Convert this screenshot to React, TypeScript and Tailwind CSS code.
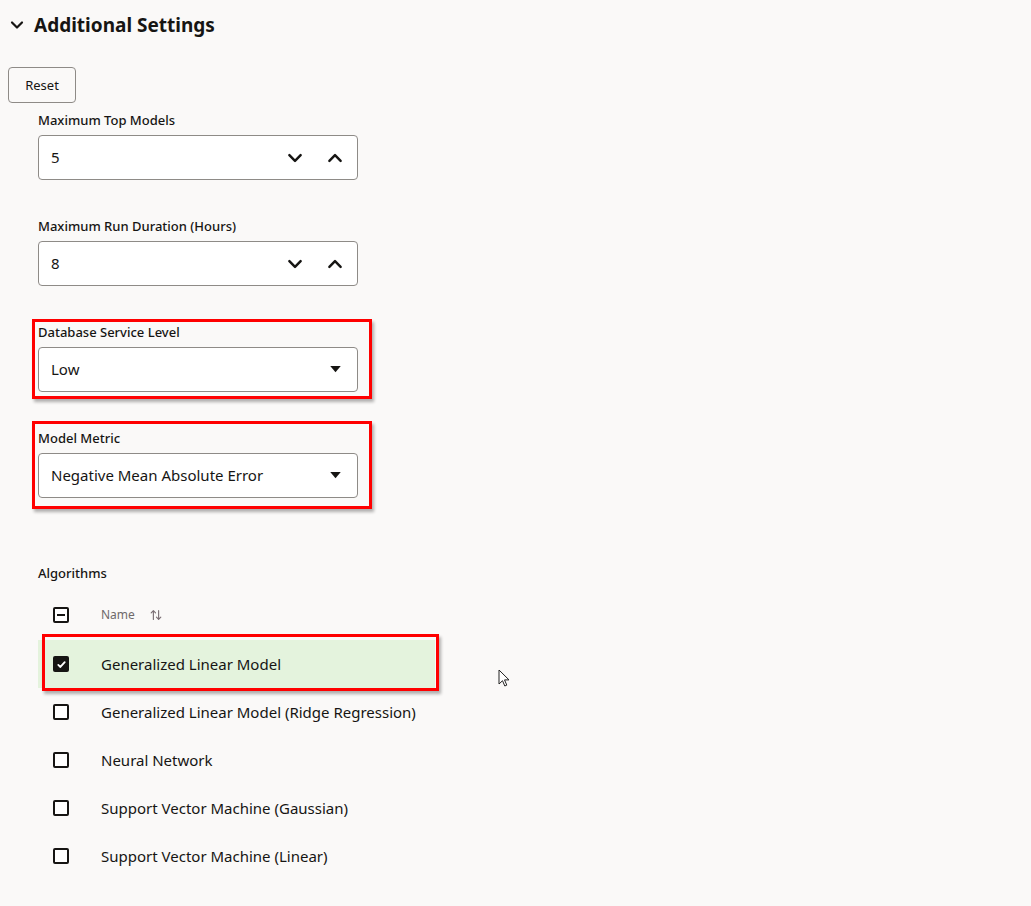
import { useState } from 'react'

const font = { fontFamily: '"Noto Sans", "Open Sans", sans-serif' }

function ChevronDown({ className = '' }: { className?: string }) {
  return (
    <svg viewBox="0 0 16 16" className={className} fill="none" stroke="currentColor" strokeWidth={2.2} strokeLinecap="round" strokeLinejoin="round">
      <path d="M3 5.5l5 5 5-5" />
    </svg>
  )
}

function ChevronUp({ className = '' }: { className?: string }) {
  return (
    <svg viewBox="0 0 16 16" className={className} fill="none" stroke="currentColor" strokeWidth={2.2} strokeLinecap="round" strokeLinejoin="round">
      <path d="M3 10.5l5-5 5 5" />
    </svg>
  )
}

function Label({ children }: { children: React.ReactNode }) {
  return <div className="text-[13px] leading-4 font-medium text-[#161513]">{children}</div>
}

function NumberField({ label, value }: { label: string; value: string }) {
  return (
    <div>
      <Label>{label}</Label>
      <div className="mt-[7px] flex h-[45px] w-[320px] items-center rounded-[4px] border border-[#8e8b87] bg-white pl-[12px] pr-[13px]">
        <span className="flex-1 text-[15px] text-[#161513]">{value}</span>
        <ChevronDown className="h-[18px] w-[18px] text-[#161513]" />
        <ChevronUp className="ml-[22px] h-[18px] w-[18px] text-[#161513]" />
      </div>
    </div>
  )
}

function SelectField({ label, value }: { label: string; value: string }) {
  return (
    <div>
      <Label>{label}</Label>
      <div className="mt-[7px] flex h-[45px] w-[320px] items-center rounded-[4px] border border-[#8e8b87] bg-white pl-[12px] pr-[15px]">
        <span className="flex-1 text-[15px] text-[#161513]">{value}</span>
        <svg viewBox="0 0 12 8" className="h-[7px] w-[13px] text-[#161513]" fill="currentColor">
          <path d="M0 0h12L6 7z" />
        </svg>
      </div>
    </div>
  )
}

// red annotation frame drawn over a field
function Annotated({ children, className }: { children: React.ReactNode; className: string }) {
  return (
    <div className="relative">
      {children}
      <div className={`pointer-events-none absolute border-[3px] border-[#ff0000] shadow-[2px_3px_3px_rgba(0,0,0,0.3)] ${className}`} />
    </div>
  )
}

function Checkbox({ checked, mixed }: { checked?: boolean; mixed?: boolean }) {
  if (checked) {
    return (
      <div className="flex h-[16px] w-[16px] items-center justify-center rounded-[2px] bg-[#161513]">
        <svg viewBox="0 0 12 12" className="h-[11px] w-[11px]" fill="none" stroke="white" strokeWidth={2} strokeLinecap="round" strokeLinejoin="round">
          <path d="M2.5 6.5l2.3 2.2L9.5 3.5" />
        </svg>
      </div>
    )
  }
  return (
    <div className="flex h-[16px] w-[16px] items-center justify-center rounded-[2px] border-2 border-[#161513] bg-white">
      {mixed && <div className="h-[2px] w-[8px] bg-[#161513]" />}
    </div>
  )
}

const algorithms = [
  'Generalized Linear Model',
  'Generalized Linear Model (Ridge Regression)',
  'Neural Network',
  'Support Vector Machine (Gaussian)',
  'Support Vector Machine (Linear)',
]

export default function App() {
  const [selected] = useState([true, false, false, false, false])

  return (
    <div className="relative min-h-[906px] w-full bg-[#faf9f8] text-[#161513]" style={font}>
      {/* Header */}
      <div className="flex items-center pl-[9px] pt-[12px]">
        <ChevronDown className="h-[16px] w-[16px]" />
        <h2 className="ml-[9px] text-[19px] leading-[26px] font-bold">Additional Settings</h2>
      </div>

      <div className="pl-[8px] pt-[29px]">
        <button className="h-[36px] w-[68px] rounded-[4px] border border-[#8e8b87] bg-[#faf9f8] pt-[2px] text-[13px] text-[#161513]">
          Reset
        </button>
      </div>

      <div className="pl-[38px] pt-[9px]">
        <div className="flex flex-col gap-[38px]">
          <NumberField label="Maximum Top Models" value="5" />
          <NumberField label="Maximum Run Duration (Hours)" value="8" />
          <Annotated className="-left-[6px] -top-[5px] h-[80px] w-[340px]">
            <SelectField label="Database Service Level" value="Low" />
          </Annotated>
          <Annotated className="-left-[6px] -top-[9px] h-[88px] w-[340px]">
            <SelectField label="Model Metric" value="Negative Mean Absolute Error" />
          </Annotated>
        </div>

        {/* Algorithms */}
        <div className="mt-[67px]">
          <Label>Algorithms</Label>
          <div className="mt-[9px] w-[397px]">
            <div className="flex h-[50px] items-center pl-[15px]">
              <Checkbox mixed />
              <span className="ml-[32px] text-[12px] text-[#6f6a6a]">Name</span>
              <svg viewBox="0 0 16 16" className="ml-[14px] h-[14px] w-[14px] text-[#7a6e73]" fill="none" stroke="currentColor" strokeWidth={1.3} strokeLinecap="round" strokeLinejoin="round">
                <path d="M5 13V3M2.5 5.5L5 3l2.5 2.5M11 3v10M8.5 10.5L11 13l2.5-2.5" />
              </svg>
            </div>
            {algorithms.map((name, i) => (
              <div key={name} className={i === 0 ? 'relative' : ''}>
                <div className={`flex h-[48px] items-center pl-[15px] ${selected[i] ? 'bg-[#e4f3dd]' : ''}`}>
                  <Checkbox checked={selected[i]} />
                  <span className="ml-[32px] text-[15px] text-[#161513]">{name}</span>
                </div>
                {i === 0 && (
                  <div className="pointer-events-none absolute -top-[6px] left-[4px] h-[57px] w-[397px] border-[3px] border-[#ff0000] shadow-[2px_3px_3px_rgba(0,0,0,0.3)]" />
                )}
              </div>
            ))}
          </div>
        </div>
      </div>

      {/* mouse cursor */}
      <svg viewBox="0 0 12 19" className="absolute left-[498px] top-[669px] h-[19px] w-[12px]">
        <path d="M1 1v14l3.5-3.3 2.3 5.3 2-.9-2.3-5.2H11z" fill="white" stroke="#222" strokeWidth={1} strokeLinejoin="round" />
      </svg>
    </div>
  )
}
